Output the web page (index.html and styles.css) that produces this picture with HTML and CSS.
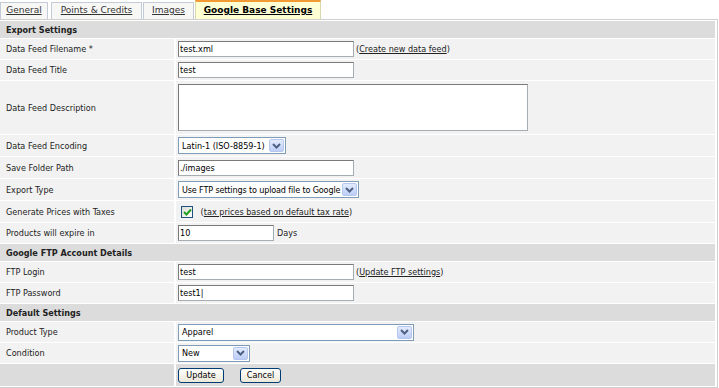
FILE: index.html
```html
<!DOCTYPE html>
<html lang="en">
<head>
  <meta charset="UTF-8"/>
  <title>Google Base Settings</title>
  <link rel="stylesheet" href="styles.css">
</head>
<body>

  <div class="tabs">
    <a class="tab t-general" href="#">General</a>
    <a class="tab t-points" href="#">Points &amp; Credits</a>
    <a class="tab t-images" href="#">Images</a>
    <a class="tab active" href="#">Google Base Settings</a>
  </div>

  <table class="settings">
    <tr class="section"><td colspan="2">Export Settings</td></tr>
    <tr>
      <td class="label">Data Feed Filename *</td>
      <td class="field"><input class="text" type="text" value="test.xml"><span class="note">(<a href="#">Create new data feed</a>)</span></td>
    </tr>
    <tr>
      <td class="label">Data Feed Title</td>
      <td class="field"><input class="text" type="text" value="test"></td>
    </tr>
    <tr class="tall">
      <td class="label">Data Feed Description</td>
      <td class="field"><textarea class="area"></textarea></td>
    </tr>
    <tr class="mid">
      <td class="label">Data Feed Encoding</td>
      <td class="field">
        <div class="select enc"><span>Latin-1 (ISO-8859-1)</span><i class="drop"><svg width="9" height="6" viewBox="0 0 9 6"><path d="M1 1l3.5 3.5L8 1" fill="none" stroke="#4d6185" stroke-width="2"/></svg></i></div>
      </td>
    </tr>
    <tr class="mid">
      <td class="label">Save Folder Path</td>
      <td class="field"><input class="text" type="text" value="./images"></td>
    </tr>
    <tr class="mid">
      <td class="label">Export Type</td>
      <td class="field">
        <div class="select export"><span>Use FTP settings to upload file to Google</span><i class="drop"><svg width="9" height="6" viewBox="0 0 9 6"><path d="M1 1l3.5 3.5L8 1" fill="none" stroke="#4d6185" stroke-width="2"/></svg></i></div>
      </td>
    </tr>
    <tr class="mid">
      <td class="label">Generate Prices with Taxes</td>
      <td class="field">
        <span class="check"><svg width="9" height="8" viewBox="0 0 9 8"><path d="M1 4l2.5 2.5L8 1.5" fill="none" stroke="#21a121" stroke-width="2"/></svg></span>
        <span class="note">(<a href="#">tax prices based on default tax rate</a>)</span>
      </td>
    </tr>
    <tr>
      <td class="label">Products will expire in</td>
      <td class="field"><input class="text short" type="text" value="10"><span class="note days">Days</span></td>
    </tr>
    <tr class="section"><td colspan="2">Google FTP Account Details</td></tr>
    <tr>
      <td class="label">FTP Login</td>
      <td class="field"><input class="text" type="text" value="test"><span class="note">(<a href="#">Update FTP settings</a>)</span></td>
    </tr>
    <tr>
      <td class="label">FTP Password</td>
      <td class="field"><input class="text" type="text" value="test1|"></td>
    </tr>
    <tr class="section"><td colspan="2">Default Settings</td></tr>
    <tr>
      <td class="label">Product Type</td>
      <td class="field">
        <div class="select product"><span>Apparel</span><i class="drop"><svg width="9" height="6" viewBox="0 0 9 6"><path d="M1 1l3.5 3.5L8 1" fill="none" stroke="#4d6185" stroke-width="2"/></svg></i></div>
      </td>
    </tr>
    <tr>
      <td class="label">Condition</td>
      <td class="field">
        <div class="select cond"><span>New</span><i class="drop"><svg width="9" height="6" viewBox="0 0 9 6"><path d="M1 1l3.5 3.5L8 1" fill="none" stroke="#4d6185" stroke-width="2"/></svg></i></div>
      </td>
    </tr>
    <tr class="buttons">
      <td></td>
      <td class="field"><button class="btn update">Update</button><button class="btn cancel">Cancel</button></td>
    </tr>
  </table>

</body>
</html>
```

FILE: styles.css
```css
* {
  box-sizing: border-box;
}

body {
  margin: 0;
  font-family: "DejaVu Sans Condensed", "DejaVu Sans", sans-serif;
  font-stretch: condensed;
  font-size: 9px;
  line-height: 12px;
  color: #222;
  background: #fff;
}

/* Tabs */
.tabs {
  display: flex;
  height: 19px;
  align-items: flex-end;
}

.tab {
  display: block;
  height: 17px;
  line-height: 15px;
  text-align: center;
  margin-right: 1px;
  border: 1px solid #c3ccd6;
  border-bottom: none;
  background: #f7f7f5;
  color: #333;
  font-family: "DejaVu Sans", sans-serif;
  font-stretch: normal;
  font-size: 9px;
}

.t-general { width: 48px; margin-right: 3px; }
.t-points { width: 91px; }
.t-images { width: 51px; }

.tab.active {
  width: 126px;
  height: 19px;
  line-height: 17px;
  background: #ffffd4;
  border: 1px solid #d9d9b0;
  border-top: 2px solid #f29a33;
  border-bottom: none;
  color: #000;
  font-weight: bold;
}

/* Settings table */
.settings {
  width: 720px;
  border-collapse: separate;
  border-spacing: 2px 1px;
  margin-left: -2px;
  border-top: 1px solid #cfcfcf;
  border-right: 1px solid #cfcfcf;
  border-bottom: 1px solid #cfcfcf;
  background: #fff;
}

.settings td {
  background: #f2f2f2;
  height: 20px;
  padding: 0;
  vertical-align: middle;
}

.settings .section td {
  background: #dcdcdc;
  height: 17px;
  font-weight: bold;
  padding-left: 6px;
}

.settings .tall td {
  height: 53px;
}

.settings .mid td {
  height: 21px;
}

.settings .buttons td {
  background: #dcdcdc;
  height: 22px;
}

.label {
  width: 174px;
  padding-left: 6px !important;
}

.field {
  padding-left: 2px !important;
  white-space: nowrap;
}

.note {
  vertical-align: middle;
  margin-left: 2px;
}

.note.days {
  margin-left: 3px;
}

.note a {
  color: #222;
}

.text {
  width: 176px;
  height: 16px;
  border: 1px solid #a5acb2;
  border-top-color: #7a7a7a;
  border-left-color: #7a7a7a;
  background: #fff;
  font: 9px "DejaVu Sans Condensed", "DejaVu Sans", sans-serif;
  font-stretch: condensed;
  padding: 0 1px;
  vertical-align: middle;
  margin: 0;
  color: #000;
}

.text.short {
  width: 96px;
}

.area {
  display: block;
  width: 350px;
  height: 47px;
  border: 1px solid #a5acb2;
  border-top-color: #7a7a7a;
  border-left-color: #7a7a7a;
  background: #fff;
  resize: none;
  margin: 0;
}

/* Windows XP style dropdowns */
.select {
  display: inline-flex;
  align-items: center;
  justify-content: space-between;
  height: 17px;
  border: 1px solid #7f9db9;
  background: #fff;
  padding-left: 3px;
  padding-right: 1px;
  vertical-align: middle;
  color: #000;
}

.select .drop {
  display: flex;
  align-items: center;
  justify-content: center;
  width: 15px;
  height: 13px;
  background: linear-gradient(#e3ebfd, #bccdf7);
  border: 1px solid #b5c7ef;
  border-radius: 2px;
}

.select.enc { width: 108px; }
.select.export { width: 181px; letter-spacing: -0.15px; }
.select.product { width: 236px; }
.select.cond { width: 72px; }

.check {
  display: inline-flex;
  align-items: center;
  justify-content: center;
  width: 12px;
  height: 12px;
  border: 1px solid #1c5180;
  background: linear-gradient(135deg, #dcdcd7, #fff);
  margin: 0 3px 0 3px;
  vertical-align: middle;
}

.btn {
  height: 15px;
  padding: 0;
  font: 9px "DejaVu Sans Condensed", "DejaVu Sans", sans-serif;
  font-stretch: condensed;
  border: 1px solid #003c74;
  border-radius: 3px;
  background: linear-gradient(#fff, #ece9d8);
  color: #000;
  margin: 0;
  vertical-align: middle;
  line-height: 12px;
}

.btn.update {
  width: 46px;
  margin-right: 16px;
}

.btn.cancel {
  width: 41px;
}
```
